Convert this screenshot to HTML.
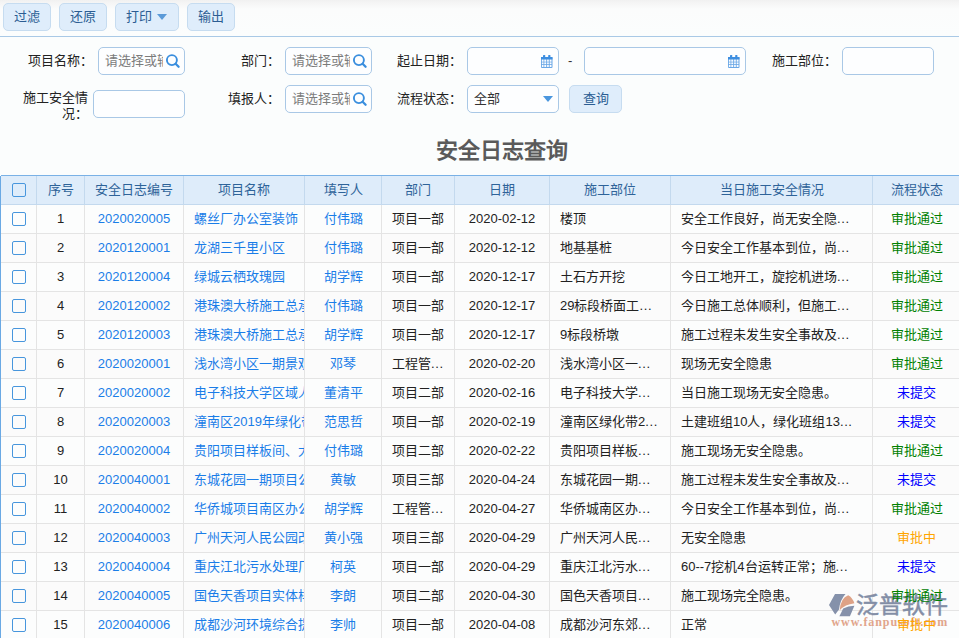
<!DOCTYPE html>
<html lang="zh-CN"><head><meta charset="utf-8">
<style>
*{box-sizing:border-box;margin:0;padding:0}
html,body{width:959px;height:638px;overflow:hidden;background:#fbfdfd;font-family:"Liberation Sans",sans-serif;font-size:13px;color:#333}
.a{position:absolute}
.tb{position:absolute;left:0;top:0;width:959px;height:36px;background:linear-gradient(#f1f1f1 0px,#f5f5f5 3px,#fbfcfc 9px,#fbfdfd 36px)}
.tl{position:absolute;left:0;top:36px;width:959px;height:1px;background:#a9c9e6}
.btn{position:absolute;top:3px;height:28px;border:1px solid #c6dcf0;border-radius:5px;background:#dfedfb;color:#2b5d93;line-height:25px;text-align:center;font-size:13px}
.lbl{position:absolute;text-align:right;color:#222;line-height:15px}
.inp{position:absolute;height:28px;border:1px solid #a9c8e6;border-radius:5px;background:#fdfeff}
.ph{position:absolute;color:#7c7c7c;white-space:nowrap;overflow:hidden;line-height:15px}
.title{position:absolute;left:0;width:1003px;top:138px;text-align:center;font-size:22px;font-weight:bold;color:#5a5a5a;line-height:26px}
.vl{position:absolute;width:1px}
.hl{position:absolute;height:1px;left:1px;width:959px}
.c{position:absolute;white-space:nowrap;overflow:hidden;line-height:15px}
.cb{position:absolute;left:12px;width:14px;height:14px;border:1px solid #4796dd;border-radius:2px;background:transparent}
</style></head><body>

<div class="tb"></div><div class="tl"></div>
<div class="btn" style="left:3px;width:48px">过滤</div>
<div class="btn" style="left:59px;width:48px">还原</div>
<div class="btn" style="left:115px;width:64px;text-align:left;padding-left:10px">打印<span style="position:absolute;left:41px;top:10px;width:0;height:0;border-left:5px solid transparent;border-right:5px solid transparent;border-top:6px solid #5b9ad8"></span></div>
<div class="btn" style="left:187px;width:48px">输出</div>
<div class="lbl" style="left:13px;top:53px;width:80px">项目名称：</div>
<div class="inp" style="left:98px;top:47px;width:87px"><div class="ph" style="left:6px;top:5px;width:58px">请选择或输入</div><svg width="20" height="20" viewBox="0 0 20 20" style="position:absolute;left:64px;top:4px"><circle cx="8.9" cy="8.1" r="5" fill="none" stroke="#3a8ede" stroke-width="1.9"/><line x1="12.6" y1="11.8" x2="15.6" y2="14.8" stroke="#3a8ede" stroke-width="2.3" stroke-linecap="round"/></svg></div>
<div class="lbl" style="left:200px;top:53px;width:80px">部门：</div>
<div class="inp" style="left:285px;top:47px;width:87px"><div class="ph" style="left:6px;top:5px;width:58px">请选择或输入</div><svg width="20" height="20" viewBox="0 0 20 20" style="position:absolute;left:64px;top:4px"><circle cx="8.9" cy="8.1" r="5" fill="none" stroke="#3a8ede" stroke-width="1.9"/><line x1="12.6" y1="11.8" x2="15.6" y2="14.8" stroke="#3a8ede" stroke-width="2.3" stroke-linecap="round"/></svg></div>
<div class="lbl" style="left:382px;top:53px;width:80px">起止日期：</div>
<div class="inp" style="left:467px;top:47px;width:92px"><svg width="13" height="14" viewBox="0 0 13 14" style="position:absolute;right:4px;top:7px"><rect x="0" y="2" width="11.5" height="11" rx="1" fill="#6aa7e6"/><rect x="0" y="2" width="11.5" height="2.4" fill="#3d8ee0"/><rect x="2" y="0" width="2.2" height="3.5" rx="0.6" fill="#3d8ee0"/><rect x="7.2" y="0" width="2.2" height="3.5" rx="0.6" fill="#3d8ee0"/><g fill="#fbfdff"><rect x="0.9" y="4.6" width="1.6" height="2.1"/><rect x="3.3" y="4.6" width="1.9" height="2.1"/><rect x="6.1" y="4.6" width="1.7" height="2.1"/><rect x="8.7" y="4.6" width="1.8" height="2.1"/><rect x="0.9" y="7.4" width="1.6" height="1.8"/><rect x="3.3" y="7.4" width="1.9" height="1.8"/><rect x="6.1" y="7.4" width="1.7" height="1.8"/><rect x="8.7" y="7.4" width="1.8" height="1.8"/><rect x="0.9" y="10" width="1.6" height="2"/><rect x="3.3" y="10" width="1.9" height="2"/><rect x="6.1" y="10" width="1.7" height="2"/><rect x="8.7" y="10" width="1.8" height="2"/></g></svg></div>
<div class="a" style="left:568px;top:53px;line-height:15px">-</div>
<div class="inp" style="left:584px;top:47px;width:162px"><svg width="13" height="14" viewBox="0 0 13 14" style="position:absolute;right:4px;top:7px"><rect x="0" y="2" width="11.5" height="11" rx="1" fill="#6aa7e6"/><rect x="0" y="2" width="11.5" height="2.4" fill="#3d8ee0"/><rect x="2" y="0" width="2.2" height="3.5" rx="0.6" fill="#3d8ee0"/><rect x="7.2" y="0" width="2.2" height="3.5" rx="0.6" fill="#3d8ee0"/><g fill="#fbfdff"><rect x="0.9" y="4.6" width="1.6" height="2.1"/><rect x="3.3" y="4.6" width="1.9" height="2.1"/><rect x="6.1" y="4.6" width="1.7" height="2.1"/><rect x="8.7" y="4.6" width="1.8" height="2.1"/><rect x="0.9" y="7.4" width="1.6" height="1.8"/><rect x="3.3" y="7.4" width="1.9" height="1.8"/><rect x="6.1" y="7.4" width="1.7" height="1.8"/><rect x="8.7" y="7.4" width="1.8" height="1.8"/><rect x="0.9" y="10" width="1.6" height="2"/><rect x="3.3" y="10" width="1.9" height="2"/><rect x="6.1" y="10" width="1.7" height="2"/><rect x="8.7" y="10" width="1.8" height="2"/></g></svg></div>
<div class="lbl" style="left:757px;top:53px;width:80px">施工部位：</div>
<div class="inp" style="left:842px;top:47px;width:92px"></div>
<div class="lbl" style="left:22px;top:90px;width:66px;line-height:16px">施工安全情况：</div>
<div class="inp" style="left:93px;top:90px;width:92px"></div>
<div class="lbl" style="left:200px;top:91px;width:80px">填报人：</div>
<div class="inp" style="left:285px;top:85px;width:87px"><div class="ph" style="left:6px;top:5px;width:58px">请选择或输入</div><svg width="20" height="20" viewBox="0 0 20 20" style="position:absolute;left:64px;top:4px"><circle cx="8.9" cy="8.1" r="5" fill="none" stroke="#3a8ede" stroke-width="1.9"/><line x1="12.6" y1="11.8" x2="15.6" y2="14.8" stroke="#3a8ede" stroke-width="2.3" stroke-linecap="round"/></svg></div>
<div class="lbl" style="left:382px;top:91px;width:80px">流程状态：</div>
<div class="inp" style="left:467px;top:85px;width:92px"><div class="a" style="left:6px;top:5px;line-height:15px;color:#333">全部</div><span style="position:absolute;left:75px;top:10px;width:0;height:0;border-left:5px solid transparent;border-right:5px solid transparent;border-top:6px solid #4a96de"></span></div>
<div class="btn" style="left:569px;top:85px;width:53px;height:28px">查询</div>
<div class="title" style="left:0;width:1003px">安全日志查询</div>
<div class="a" style="left:1px;top:175px;width:959px;height:1px;background:#79b1e6"></div>
<div class="a" style="left:1px;top:176px;width:959px;height:28px;background:#deecfa"></div>
<div class="a" style="left:0;top:176px;width:1px;height:463px;background:#6aa9e4"></div>
<div class="a" style="left:1px;top:204px;width:959px;height:1px;background:#c3d9ee"></div>
<div class="a" style="left:1px;top:205px;width:959px;height:28px;background:#fcfdfd"></div>
<div class="hl" style="top:233px;background:#e4e4e4"></div>
<div class="a" style="left:1px;top:234px;width:959px;height:28px;background:#fbfbfb"></div>
<div class="hl" style="top:262px;background:#e4e4e4"></div>
<div class="a" style="left:1px;top:263px;width:959px;height:28px;background:#fcfdfd"></div>
<div class="hl" style="top:291px;background:#e4e4e4"></div>
<div class="a" style="left:1px;top:292px;width:959px;height:28px;background:#fbfbfb"></div>
<div class="hl" style="top:320px;background:#e4e4e4"></div>
<div class="a" style="left:1px;top:321px;width:959px;height:28px;background:#fcfdfd"></div>
<div class="hl" style="top:349px;background:#e4e4e4"></div>
<div class="a" style="left:1px;top:350px;width:959px;height:28px;background:#fbfbfb"></div>
<div class="hl" style="top:378px;background:#e4e4e4"></div>
<div class="a" style="left:1px;top:379px;width:959px;height:28px;background:#fcfdfd"></div>
<div class="hl" style="top:407px;background:#e4e4e4"></div>
<div class="a" style="left:1px;top:408px;width:959px;height:28px;background:#fbfbfb"></div>
<div class="hl" style="top:436px;background:#e4e4e4"></div>
<div class="a" style="left:1px;top:437px;width:959px;height:28px;background:#fcfdfd"></div>
<div class="hl" style="top:465px;background:#e4e4e4"></div>
<div class="a" style="left:1px;top:466px;width:959px;height:28px;background:#fbfbfb"></div>
<div class="hl" style="top:494px;background:#e4e4e4"></div>
<div class="a" style="left:1px;top:495px;width:959px;height:28px;background:#fcfdfd"></div>
<div class="hl" style="top:523px;background:#e4e4e4"></div>
<div class="a" style="left:1px;top:524px;width:959px;height:28px;background:#fbfbfb"></div>
<div class="hl" style="top:552px;background:#e4e4e4"></div>
<div class="a" style="left:1px;top:553px;width:959px;height:28px;background:#fcfdfd"></div>
<div class="hl" style="top:581px;background:#e4e4e4"></div>
<div class="a" style="left:1px;top:582px;width:959px;height:28px;background:#fbfbfb"></div>
<div class="hl" style="top:610px;background:#e4e4e4"></div>
<div class="a" style="left:1px;top:611px;width:959px;height:28px;background:#fcfdfd"></div>
<div class="hl" style="top:639px;background:#e4e4e4"></div>
<div class="vl" style="left:36px;top:176px;height:28px;background:#c3d9ee"></div>
<div class="vl" style="left:36px;top:205px;height:434px;background:#e4e4e4"></div>
<div class="vl" style="left:84px;top:176px;height:28px;background:#c3d9ee"></div>
<div class="vl" style="left:84px;top:205px;height:434px;background:#e4e4e4"></div>
<div class="vl" style="left:183px;top:176px;height:28px;background:#c3d9ee"></div>
<div class="vl" style="left:183px;top:205px;height:434px;background:#e4e4e4"></div>
<div class="vl" style="left:304px;top:176px;height:28px;background:#c3d9ee"></div>
<div class="vl" style="left:304px;top:205px;height:434px;background:#e4e4e4"></div>
<div class="vl" style="left:381px;top:176px;height:28px;background:#c3d9ee"></div>
<div class="vl" style="left:381px;top:205px;height:434px;background:#e4e4e4"></div>
<div class="vl" style="left:454px;top:176px;height:28px;background:#c3d9ee"></div>
<div class="vl" style="left:454px;top:205px;height:434px;background:#e4e4e4"></div>
<div class="vl" style="left:549px;top:176px;height:28px;background:#c3d9ee"></div>
<div class="vl" style="left:549px;top:205px;height:434px;background:#e4e4e4"></div>
<div class="vl" style="left:670px;top:176px;height:28px;background:#c3d9ee"></div>
<div class="vl" style="left:670px;top:205px;height:434px;background:#e4e4e4"></div>
<div class="vl" style="left:872px;top:176px;height:28px;background:#c3d9ee"></div>
<div class="vl" style="left:872px;top:205px;height:434px;background:#e4e4e4"></div>
<div class="cb" style="top:183px;background:transparent"></div>
<div class="c" style="left:37px;width:47px;top:182px;text-align:center;color:#2e6399">序号</div>
<div class="c" style="left:85px;width:98px;top:182px;text-align:center;color:#2e6399">安全日志编号</div>
<div class="c" style="left:184px;width:120px;top:182px;text-align:center;color:#2e6399">项目名称</div>
<div class="c" style="left:305px;width:76px;top:182px;text-align:center;color:#2e6399">填写人</div>
<div class="c" style="left:382px;width:72px;top:182px;text-align:center;color:#2e6399">部门</div>
<div class="c" style="left:455px;width:94px;top:182px;text-align:center;color:#2e6399">日期</div>
<div class="c" style="left:550px;width:120px;top:182px;text-align:center;color:#2e6399">施工部位</div>
<div class="c" style="left:671px;width:201px;top:182px;text-align:center;color:#2e6399">当日施工安全情况</div>
<div class="c" style="left:873px;width:87px;top:182px;text-align:center;color:#2e6399">流程状态</div>
<div class="cb" style="top:212px"></div>
<div class="c" style="left:37px;width:47px;top:211px;text-align:center;color:#222">1</div>
<div class="c" style="left:85px;width:98px;top:211px;text-align:center;color:#1a7de8">2020020005</div>
<div class="c" style="left:184px;width:120px;top:211px;padding-left:10px;color:#1a7de8">螺丝厂办公室装饰</div>
<div class="c" style="left:305px;width:76px;top:211px;text-align:center;color:#1a7de8">付伟璐</div>
<div class="c" style="left:382px;width:72px;top:211px;padding-left:10px;color:#222">项目一部</div>
<div class="c" style="left:455px;width:94px;top:211px;text-align:center;color:#222">2020-02-12</div>
<div class="c" style="left:550px;width:120px;top:211px;padding-left:10px;color:#222">楼顶</div>
<div class="c" style="left:671px;width:201px;top:211px;padding-left:10px;color:#222">安全工作良好，尚无安全隐<span style="letter-spacing:0.6px">...</span></div>
<div class="c" style="left:873px;width:87px;top:211px;text-align:center;color:#008000;z-index:2">审批通过</div>
<div class="cb" style="top:241px"></div>
<div class="c" style="left:37px;width:47px;top:240px;text-align:center;color:#222">2</div>
<div class="c" style="left:85px;width:98px;top:240px;text-align:center;color:#1a7de8">2020120001</div>
<div class="c" style="left:184px;width:120px;top:240px;padding-left:10px;color:#1a7de8">龙湖三千里小区</div>
<div class="c" style="left:305px;width:76px;top:240px;text-align:center;color:#1a7de8">付伟璐</div>
<div class="c" style="left:382px;width:72px;top:240px;padding-left:10px;color:#222">项目一部</div>
<div class="c" style="left:455px;width:94px;top:240px;text-align:center;color:#222">2020-12-12</div>
<div class="c" style="left:550px;width:120px;top:240px;padding-left:10px;color:#222">地基基桩</div>
<div class="c" style="left:671px;width:201px;top:240px;padding-left:10px;color:#222">今日安全工作基本到位，尚<span style="letter-spacing:0.6px">...</span></div>
<div class="c" style="left:873px;width:87px;top:240px;text-align:center;color:#008000;z-index:2">审批通过</div>
<div class="cb" style="top:270px"></div>
<div class="c" style="left:37px;width:47px;top:269px;text-align:center;color:#222">3</div>
<div class="c" style="left:85px;width:98px;top:269px;text-align:center;color:#1a7de8">2020120004</div>
<div class="c" style="left:184px;width:120px;top:269px;padding-left:10px;color:#1a7de8">绿城云栖玫瑰园</div>
<div class="c" style="left:305px;width:76px;top:269px;text-align:center;color:#1a7de8">胡学辉</div>
<div class="c" style="left:382px;width:72px;top:269px;padding-left:10px;color:#222">项目一部</div>
<div class="c" style="left:455px;width:94px;top:269px;text-align:center;color:#222">2020-12-17</div>
<div class="c" style="left:550px;width:120px;top:269px;padding-left:10px;color:#222">土石方开挖</div>
<div class="c" style="left:671px;width:201px;top:269px;padding-left:10px;color:#222">今日工地开工，旋挖机进场<span style="letter-spacing:0.6px">...</span></div>
<div class="c" style="left:873px;width:87px;top:269px;text-align:center;color:#008000;z-index:2">审批通过</div>
<div class="cb" style="top:299px"></div>
<div class="c" style="left:37px;width:47px;top:298px;text-align:center;color:#222">4</div>
<div class="c" style="left:85px;width:98px;top:298px;text-align:center;color:#1a7de8">2020120002</div>
<div class="c" style="left:184px;width:120px;top:298px;padding-left:10px;color:#1a7de8">港珠澳大桥施工总承包</div>
<div class="c" style="left:305px;width:76px;top:298px;text-align:center;color:#1a7de8">付伟璐</div>
<div class="c" style="left:382px;width:72px;top:298px;padding-left:10px;color:#222">项目一部</div>
<div class="c" style="left:455px;width:94px;top:298px;text-align:center;color:#222">2020-12-17</div>
<div class="c" style="left:550px;width:120px;top:298px;padding-left:10px;color:#222">29标段桥面工<span style="letter-spacing:0.6px">...</span></div>
<div class="c" style="left:671px;width:201px;top:298px;padding-left:10px;color:#222">今日施工总体顺利，但施工<span style="letter-spacing:0.6px">...</span></div>
<div class="c" style="left:873px;width:87px;top:298px;text-align:center;color:#008000;z-index:2">审批通过</div>
<div class="cb" style="top:328px"></div>
<div class="c" style="left:37px;width:47px;top:327px;text-align:center;color:#222">5</div>
<div class="c" style="left:85px;width:98px;top:327px;text-align:center;color:#1a7de8">2020120003</div>
<div class="c" style="left:184px;width:120px;top:327px;padding-left:10px;color:#1a7de8">港珠澳大桥施工总承包</div>
<div class="c" style="left:305px;width:76px;top:327px;text-align:center;color:#1a7de8">胡学辉</div>
<div class="c" style="left:382px;width:72px;top:327px;padding-left:10px;color:#222">项目一部</div>
<div class="c" style="left:455px;width:94px;top:327px;text-align:center;color:#222">2020-12-17</div>
<div class="c" style="left:550px;width:120px;top:327px;padding-left:10px;color:#222">9标段桥墩</div>
<div class="c" style="left:671px;width:201px;top:327px;padding-left:10px;color:#222">施工过程未发生安全事故及<span style="letter-spacing:0.6px">...</span></div>
<div class="c" style="left:873px;width:87px;top:327px;text-align:center;color:#008000;z-index:2">审批通过</div>
<div class="cb" style="top:357px"></div>
<div class="c" style="left:37px;width:47px;top:356px;text-align:center;color:#222">6</div>
<div class="c" style="left:85px;width:98px;top:356px;text-align:center;color:#1a7de8">2020020001</div>
<div class="c" style="left:184px;width:120px;top:356px;padding-left:10px;color:#1a7de8">浅水湾小区一期景观</div>
<div class="c" style="left:305px;width:76px;top:356px;text-align:center;color:#1a7de8">邓琴</div>
<div class="c" style="left:382px;width:72px;top:356px;padding-left:10px;color:#222">工程管<span style="letter-spacing:0.6px">...</span></div>
<div class="c" style="left:455px;width:94px;top:356px;text-align:center;color:#222">2020-02-20</div>
<div class="c" style="left:550px;width:120px;top:356px;padding-left:10px;color:#222">浅水湾小区一<span style="letter-spacing:0.6px">...</span></div>
<div class="c" style="left:671px;width:201px;top:356px;padding-left:10px;color:#222">现场无安全隐患</div>
<div class="c" style="left:873px;width:87px;top:356px;text-align:center;color:#008000;z-index:2">审批通过</div>
<div class="cb" style="top:386px"></div>
<div class="c" style="left:37px;width:47px;top:385px;text-align:center;color:#222">7</div>
<div class="c" style="left:85px;width:98px;top:385px;text-align:center;color:#1a7de8">2020020002</div>
<div class="c" style="left:184px;width:120px;top:385px;padding-left:10px;color:#1a7de8">电子科技大学区域人</div>
<div class="c" style="left:305px;width:76px;top:385px;text-align:center;color:#1a7de8">董清平</div>
<div class="c" style="left:382px;width:72px;top:385px;padding-left:10px;color:#222">项目二部</div>
<div class="c" style="left:455px;width:94px;top:385px;text-align:center;color:#222">2020-02-16</div>
<div class="c" style="left:550px;width:120px;top:385px;padding-left:10px;color:#222">电子科技大学<span style="letter-spacing:0.6px">...</span></div>
<div class="c" style="left:671px;width:201px;top:385px;padding-left:10px;color:#222">当日施工现场无安全隐患。</div>
<div class="c" style="left:873px;width:87px;top:385px;text-align:center;color:#0000ff;z-index:2">未提交</div>
<div class="cb" style="top:415px"></div>
<div class="c" style="left:37px;width:47px;top:414px;text-align:center;color:#222">8</div>
<div class="c" style="left:85px;width:98px;top:414px;text-align:center;color:#1a7de8">2020020003</div>
<div class="c" style="left:184px;width:120px;top:414px;padding-left:10px;color:#1a7de8">潼南区2019年绿化带</div>
<div class="c" style="left:305px;width:76px;top:414px;text-align:center;color:#1a7de8">范思哲</div>
<div class="c" style="left:382px;width:72px;top:414px;padding-left:10px;color:#222">项目一部</div>
<div class="c" style="left:455px;width:94px;top:414px;text-align:center;color:#222">2020-02-19</div>
<div class="c" style="left:550px;width:120px;top:414px;padding-left:10px;color:#222">潼南区绿化带2<span style="letter-spacing:0.6px">...</span></div>
<div class="c" style="left:671px;width:201px;top:414px;padding-left:10px;color:#222">土建班组10人，绿化班组13<span style="letter-spacing:0.6px">...</span></div>
<div class="c" style="left:873px;width:87px;top:414px;text-align:center;color:#0000ff;z-index:2">未提交</div>
<div class="cb" style="top:444px"></div>
<div class="c" style="left:37px;width:47px;top:443px;text-align:center;color:#222">9</div>
<div class="c" style="left:85px;width:98px;top:443px;text-align:center;color:#1a7de8">2020020004</div>
<div class="c" style="left:184px;width:120px;top:443px;padding-left:10px;color:#1a7de8">贵阳项目样板间、大</div>
<div class="c" style="left:305px;width:76px;top:443px;text-align:center;color:#1a7de8">付伟璐</div>
<div class="c" style="left:382px;width:72px;top:443px;padding-left:10px;color:#222">项目二部</div>
<div class="c" style="left:455px;width:94px;top:443px;text-align:center;color:#222">2020-02-22</div>
<div class="c" style="left:550px;width:120px;top:443px;padding-left:10px;color:#222">贵阳项目样板<span style="letter-spacing:0.6px">...</span></div>
<div class="c" style="left:671px;width:201px;top:443px;padding-left:10px;color:#222">施工现场无安全隐患。</div>
<div class="c" style="left:873px;width:87px;top:443px;text-align:center;color:#008000;z-index:2">审批通过</div>
<div class="cb" style="top:473px"></div>
<div class="c" style="left:37px;width:47px;top:472px;text-align:center;color:#222">10</div>
<div class="c" style="left:85px;width:98px;top:472px;text-align:center;color:#1a7de8">2020040001</div>
<div class="c" style="left:184px;width:120px;top:472px;padding-left:10px;color:#1a7de8">东城花园一期项目公</div>
<div class="c" style="left:305px;width:76px;top:472px;text-align:center;color:#1a7de8">黄敏</div>
<div class="c" style="left:382px;width:72px;top:472px;padding-left:10px;color:#222">项目三部</div>
<div class="c" style="left:455px;width:94px;top:472px;text-align:center;color:#222">2020-04-24</div>
<div class="c" style="left:550px;width:120px;top:472px;padding-left:10px;color:#222">东城花园一期<span style="letter-spacing:0.6px">...</span></div>
<div class="c" style="left:671px;width:201px;top:472px;padding-left:10px;color:#222">施工过程未发生安全事故及<span style="letter-spacing:0.6px">...</span></div>
<div class="c" style="left:873px;width:87px;top:472px;text-align:center;color:#0000ff;z-index:2">未提交</div>
<div class="cb" style="top:502px"></div>
<div class="c" style="left:37px;width:47px;top:501px;text-align:center;color:#222">11</div>
<div class="c" style="left:85px;width:98px;top:501px;text-align:center;color:#1a7de8">2020040002</div>
<div class="c" style="left:184px;width:120px;top:501px;padding-left:10px;color:#1a7de8">华侨城项目南区办公</div>
<div class="c" style="left:305px;width:76px;top:501px;text-align:center;color:#1a7de8">胡学辉</div>
<div class="c" style="left:382px;width:72px;top:501px;padding-left:10px;color:#222">工程管<span style="letter-spacing:0.6px">...</span></div>
<div class="c" style="left:455px;width:94px;top:501px;text-align:center;color:#222">2020-04-27</div>
<div class="c" style="left:550px;width:120px;top:501px;padding-left:10px;color:#222">华侨城南区办<span style="letter-spacing:0.6px">...</span></div>
<div class="c" style="left:671px;width:201px;top:501px;padding-left:10px;color:#222">今日安全工作基本到位，尚<span style="letter-spacing:0.6px">...</span></div>
<div class="c" style="left:873px;width:87px;top:501px;text-align:center;color:#008000;z-index:2">审批通过</div>
<div class="cb" style="top:531px"></div>
<div class="c" style="left:37px;width:47px;top:530px;text-align:center;color:#222">12</div>
<div class="c" style="left:85px;width:98px;top:530px;text-align:center;color:#1a7de8">2020040003</div>
<div class="c" style="left:184px;width:120px;top:530px;padding-left:10px;color:#1a7de8">广州天河人民公园改</div>
<div class="c" style="left:305px;width:76px;top:530px;text-align:center;color:#1a7de8">黄小强</div>
<div class="c" style="left:382px;width:72px;top:530px;padding-left:10px;color:#222">项目三部</div>
<div class="c" style="left:455px;width:94px;top:530px;text-align:center;color:#222">2020-04-29</div>
<div class="c" style="left:550px;width:120px;top:530px;padding-left:10px;color:#222">广州天河人民<span style="letter-spacing:0.6px">...</span></div>
<div class="c" style="left:671px;width:201px;top:530px;padding-left:10px;color:#222">无安全隐患</div>
<div class="c" style="left:873px;width:87px;top:530px;text-align:center;color:#ffa500;z-index:2">审批中</div>
<div class="cb" style="top:560px"></div>
<div class="c" style="left:37px;width:47px;top:559px;text-align:center;color:#222">13</div>
<div class="c" style="left:85px;width:98px;top:559px;text-align:center;color:#1a7de8">2020040004</div>
<div class="c" style="left:184px;width:120px;top:559px;padding-left:10px;color:#1a7de8">重庆江北污水处理厂</div>
<div class="c" style="left:305px;width:76px;top:559px;text-align:center;color:#1a7de8">柯英</div>
<div class="c" style="left:382px;width:72px;top:559px;padding-left:10px;color:#222">项目一部</div>
<div class="c" style="left:455px;width:94px;top:559px;text-align:center;color:#222">2020-04-29</div>
<div class="c" style="left:550px;width:120px;top:559px;padding-left:10px;color:#222">重庆江北污水<span style="letter-spacing:0.6px">...</span></div>
<div class="c" style="left:671px;width:201px;top:559px;padding-left:10px;color:#222">60--7挖机4台运转正常；施<span style="letter-spacing:0.6px">...</span></div>
<div class="c" style="left:873px;width:87px;top:559px;text-align:center;color:#0000ff;z-index:2">未提交</div>
<div class="cb" style="top:589px"></div>
<div class="c" style="left:37px;width:47px;top:588px;text-align:center;color:#222">14</div>
<div class="c" style="left:85px;width:98px;top:588px;text-align:center;color:#1a7de8">2020040005</div>
<div class="c" style="left:184px;width:120px;top:588px;padding-left:10px;color:#1a7de8">国色天香项目实体样</div>
<div class="c" style="left:305px;width:76px;top:588px;text-align:center;color:#1a7de8">李朗</div>
<div class="c" style="left:382px;width:72px;top:588px;padding-left:10px;color:#222">项目二部</div>
<div class="c" style="left:455px;width:94px;top:588px;text-align:center;color:#222">2020-04-30</div>
<div class="c" style="left:550px;width:120px;top:588px;padding-left:10px;color:#222">国色天香项目<span style="letter-spacing:0.6px">...</span></div>
<div class="c" style="left:671px;width:201px;top:588px;padding-left:10px;color:#222">施工现场完全隐患。</div>
<div class="c" style="left:873px;width:87px;top:588px;text-align:center;color:#008000;z-index:2">审批通过</div>
<div class="cb" style="top:618px"></div>
<div class="c" style="left:37px;width:47px;top:617px;text-align:center;color:#222">15</div>
<div class="c" style="left:85px;width:98px;top:617px;text-align:center;color:#1a7de8">2020040006</div>
<div class="c" style="left:184px;width:120px;top:617px;padding-left:10px;color:#1a7de8">成都沙河环境综合提</div>
<div class="c" style="left:305px;width:76px;top:617px;text-align:center;color:#1a7de8">李帅</div>
<div class="c" style="left:382px;width:72px;top:617px;padding-left:10px;color:#222">项目一部</div>
<div class="c" style="left:455px;width:94px;top:617px;text-align:center;color:#222">2020-04-08</div>
<div class="c" style="left:550px;width:120px;top:617px;padding-left:10px;color:#222">成都沙河东郊<span style="letter-spacing:0.6px">...</span></div>
<div class="c" style="left:671px;width:201px;top:617px;padding-left:10px;color:#222">正常</div>
<div class="c" style="left:873px;width:87px;top:617px;text-align:center;color:#ffa500;z-index:2">审批中</div>
<svg class="a" style="left:825px;top:588px;z-index:1" width="134" height="50" viewBox="0 0 134 50">
<path d="M10,6 L20.5,6 Q15,12 14,21.5 L10.2,26.5 L4,17 Z" fill="#8591aa"/>
<path d="M14.7,22.3 Q15.5,10 23.2,7.2 Q27.5,9.5 29.4,15.3 Q20,16.5 14.7,22.3 Z" fill="#dea286"/>
<path d="M14.4,28.3 L18.2,20.5 Q23,17.8 29.4,17.8 L24.9,28.3 Z" fill="#8591aa"/>
<text x="31" y="25" font-size="23" fill="#838ea6" stroke="#838ea6" stroke-width="0.5" font-weight="500" letter-spacing="0">泛普软件</text>
<text x="6.5" y="38" font-size="12" fill="#e1a58c" font-weight="bold" font-family="Liberation Serif" letter-spacing="0.9">www.fanpusoft.com</text>
</svg>
</body></html>
